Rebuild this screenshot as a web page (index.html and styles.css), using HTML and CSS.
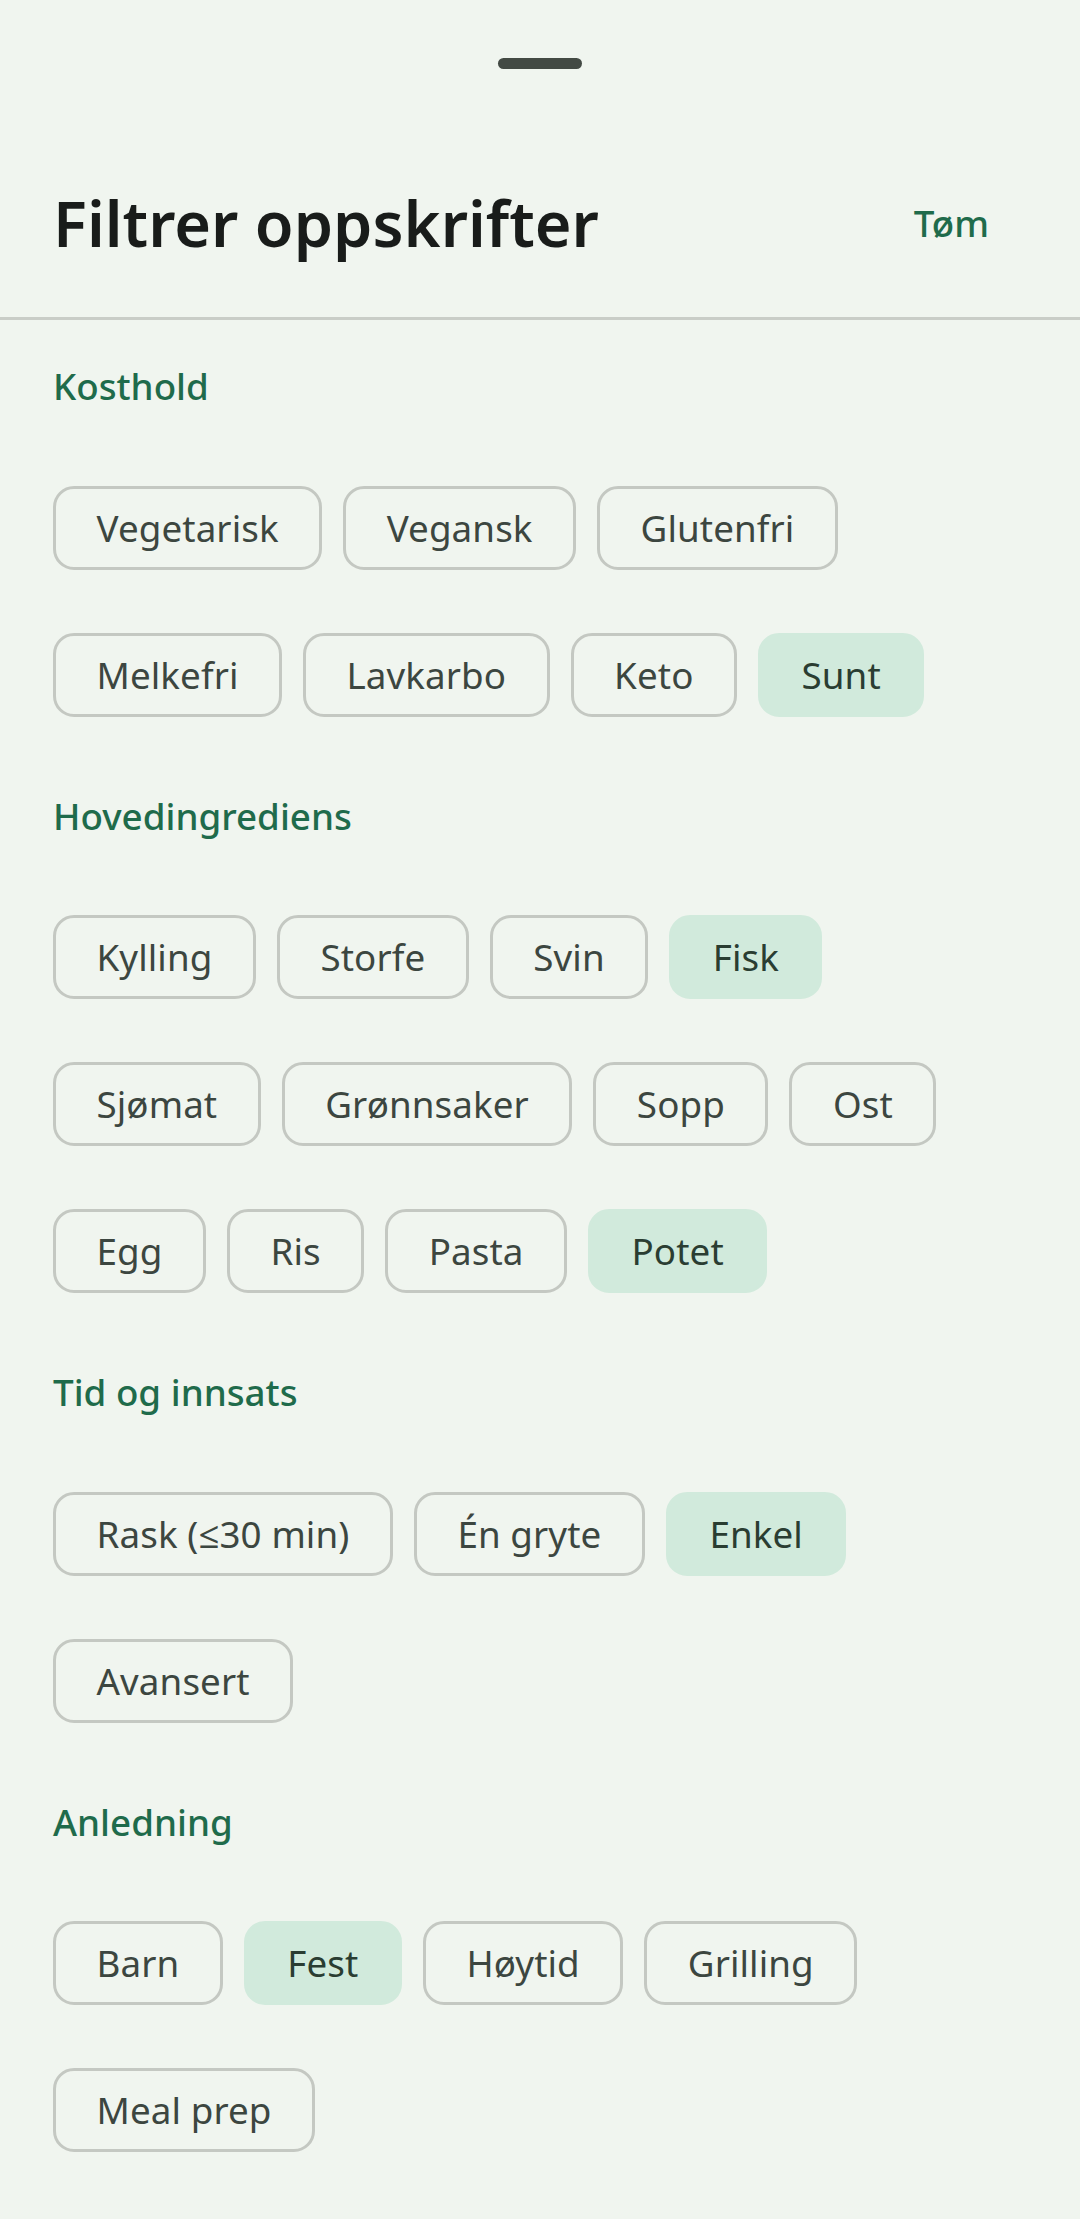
FILE: index.html
```html
<!DOCTYPE html>
<html lang="no">
<head>
    <meta charset="UTF-8">
    <meta name="viewport" content="width=device-width, initial-scale=1.0">
    <title>Filtrer oppskrifter</title>
    <link rel="stylesheet" href="styles.css">
</head>
<body>
    <div class="sheet">
        <div class="sheet__handle"></div>

        <div class="sheet__header">
            <h1 class="sheet__title">Filtrer oppskrifter</h1>
            <button class="sheet__clear">Tøm</button>
        </div>
        <div class="sheet__divider"></div>

        <div class="filters">
            <h3 class="filters__heading">Kosthold</h3>
            <div class="chips">
                <button class="chip">Vegetarisk</button>
                <button class="chip">Vegansk</button>
                <button class="chip">Glutenfri</button>
                <button class="chip">Melkefri</button>
                <button class="chip">Lavkarbo</button>
                <button class="chip">Keto</button>
                <button class="chip chip--selected">Sunt</button>
            </div>

            <h3 class="filters__heading">Hovedingrediens</h3>
            <div class="chips">
                <button class="chip">Kylling</button>
                <button class="chip">Storfe</button>
                <button class="chip">Svin</button>
                <button class="chip chip--selected">Fisk</button>
                <button class="chip">Sjømat</button>
                <button class="chip">Grønnsaker</button>
                <button class="chip">Sopp</button>
                <button class="chip">Ost</button>
                <button class="chip">Egg</button>
                <button class="chip">Ris</button>
                <button class="chip">Pasta</button>
                <button class="chip chip--selected">Potet</button>
            </div>

            <h3 class="filters__heading">Tid og innsats</h3>
            <div class="chips">
                <button class="chip">Rask (≤30 min)</button>
                <button class="chip">Én gryte</button>
                <button class="chip chip--selected">Enkel</button>
                <button class="chip">Avansert</button>
            </div>

            <h3 class="filters__heading">Anledning</h3>
            <div class="chips">
                <button class="chip">Barn</button>
                <button class="chip chip--selected">Fest</button>
                <button class="chip">Høytid</button>
                <button class="chip">Grilling</button>
                <button class="chip">Meal prep</button>
            </div>
        </div>
    </div>
</body>
</html>
```

FILE: styles.css
```css
* {
    margin: 0;
    padding: 0;
    box-sizing: border-box;
    font-family: "Noto Sans", "Open Sans", sans-serif;
}

body {
    background-color: #f0f5ef;
    color: #191c1a;
}

.sheet {
    padding: 0 53px;
}

.sheet__handle {
    width: 84px;
    height: 11px;
    margin: 58px auto 0;
    border-radius: 6px;
    background-color: #434a44;
}

.sheet__header {
    display: flex;
    align-items: center;
    justify-content: space-between;
    margin-top: 112px;
}

.sheet__title {
    font-size: 63px;
    line-height: 84px;
    font-weight: 600;
    color: #191c1a;
}

.sheet__clear {
    margin-right: 38px;
    background: none;
    border: none;
    font-size: 36.75px;
    line-height: 52.5px;
    font-weight: 500;
    color: #1f6b4b;
    cursor: pointer;
}

.sheet__divider {
    height: 3px;
    margin: 52px -53px 40px;
    background-color: #c9cdc7;
}

.filters__heading {
    font-size: 36.75px;
    line-height: 52.5px;
    font-weight: 500;
    color: #1f6b4b;
}

.chips {
    display: flex;
    flex-wrap: wrap;
    column-gap: 21px;
    row-gap: 63px;
    margin: 73px 0;
}

.chip {
    display: inline-flex;
    align-items: center;
    height: 84px;
    padding: 0 40.5px;
    border: 3px solid #c4c8c2;
    border-radius: 21px;
    background: none;
    font-size: 36.75px;
    font-weight: 400;
    letter-spacing: 0.1px;
    color: #3c4640;
    cursor: pointer;
}

.chip--selected {
    border-color: #d1eadc;
    background-color: #d1eadc;
    color: #2a3d32;
}
```
